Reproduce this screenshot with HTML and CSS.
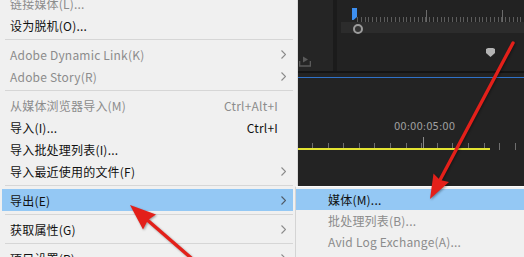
FILE: index.html
```html
<!DOCTYPE html>
<html lang="zh-CN">
<head>
    <meta charset="UTF-8">
    <title>文件菜单 - 导出</title>
    <link rel="stylesheet" href="styles.css">
</head>
<body>
    <div class="screen">
        <div class="menu">
            <div class="item disabled first"><span class="label">链接媒体(L)...</span></div>
            <div class="item"><span class="label">设为脱机(O)...</span></div>
            <div class="sep"></div>
            <div class="item disabled"><span class="label">Adobe Dynamic Link(K)</span><svg class="chev" viewBox="0 0 5 9"><path d="M0.5 0.5 L4.5 4.5 L0.5 8.5"/></svg></div>
            <div class="item disabled"><span class="label">Adobe Story(R)</span><svg class="chev" viewBox="0 0 5 9"><path d="M0.5 0.5 L4.5 4.5 L0.5 8.5"/></svg></div>
            <div class="sep"></div>
            <div class="item disabled"><span class="label">从媒体浏览器导入(M)</span><span class="key">Ctrl+Alt+I</span></div>
            <div class="item"><span class="label">导入(I)...</span><span class="key">Ctrl+I</span></div>
            <div class="item"><span class="label">导入批处理列表(I)...</span></div>
            <div class="item"><span class="label">导入最近使用的文件(F)</span><svg class="chev" viewBox="0 0 5 9"><path d="M0.5 0.5 L4.5 4.5 L0.5 8.5"/></svg></div>
            <div class="sep"></div>
            <div class="item active"><span class="label">导出(E)</span><svg class="chev" viewBox="0 0 5 9"><path d="M0.5 0.5 L4.5 4.5 L0.5 8.5"/></svg></div>
            <div class="sep"></div>
            <div class="item"><span class="label">获取属性(G)</span><svg class="chev" viewBox="0 0 5 9"><path d="M0.5 0.5 L4.5 4.5 L0.5 8.5"/></svg></div>
            <div class="sep"></div>
            <div class="item"><span class="label">项目设置(P)</span><svg class="chev" viewBox="0 0 5 9"><path d="M0.5 0.5 L4.5 4.5 L0.5 8.5"/></svg></div>
        </div>

        <div class="panel">
            <div class="panel-top">
                <div class="strip">
                    <svg class="export-icon" viewBox="0 0 12 11">
                        <path d="M4 0.5 L9 3.5 L4 6.5 Z" fill="#5a5a5a"/>
                        <path d="M0.5 5 V10 H11.5 V5" fill="none" stroke="#5a5a5a" stroke-width="1.6"/>
                    </svg>
                </div>
                <div class="divider"></div>
                <div class="ruler-area">
                    <div class="ruler"></div>
                    <div class="scrollbar"></div>
                    <svg class="playhead" viewBox="0 0 5 12"><path d="M0 0 H5 V9 L1.5 12 H0 Z"/></svg>
                    <span class="knob"></span>
                    <svg class="marker" viewBox="0 0 9 9"><path d="M0 1 L2 0 H7 L9 1 V5 L4.5 9 L0 5 Z"/></svg>
                </div>
            </div>
            <div class="line-dark"></div>
            <div class="line-gap"></div>
            <div class="line-blue"></div>
            <div class="timeline">
                <div class="timecode">00:00:05:00</div>
                <div class="ticks">
                    <span class="work-area"></span>
                </div>
            </div>
        </div>

        <div class="submenu">
            <div class="sub-item active">媒体(M)...</div>
            <div class="sub-item disabled">批处理列表(B)...</div>
            <div class="sub-item disabled">Avid Log Exchange(A)...</div>
        </div>

        <!-- red annotation arrows drawn over the screenshot -->
        <svg class="arrows" viewBox="0 0 524 257">
            <line x1="513" y1="43" x2="440" y2="180" />
            <path d="M430 199 L449 182 L440 180 L433.5 173.5 Z" />
            <line x1="205" y1="270" x2="145" y2="218" />
            <path d="M130 205 L156 214.5 L148 220 L143 229.5 Z" />
        </svg>
    </div>
</body>
</html>
```

FILE: styles.css
```css
html, body {
    margin: 0;
    padding: 0;
}
body {
    font-family: "Noto Sans CJK SC", "Noto Sans", sans-serif;
    font-size: 12px;
    letter-spacing: 0.2px;
    color: #111;
    background-color: #f0f0f0;
}
.screen {
    position: relative;
    width: 524px;
    height: 257px;
    overflow: hidden;
    display: flex;
}
.menu {
    width: 298px;
    flex: none;
    box-sizing: border-box;
    padding: 0 4px 0 2px;
    border-right: 1px solid #dadada;
    background-color: #f0f0f0;
}
.item {
    height: 22px;
    display: flex;
    align-items: center;
    padding: 0 7px 0 8px;
    white-space: nowrap;
}
.item.first {
    margin-top: -8px;
}
.item .label {
    flex: 1;
}
.item .key {
    margin-right: 8px;
}
.item.disabled {
    color: #8c8c8c;
}
.item.active {
    background-color: #94c8f4;
}
.chev {
    width: 5px;
    height: 9px;
    fill: none;
    stroke: #8a8a8a;
    stroke-width: 1.1;
}
.item.active .chev {
    stroke: #4f5a66;
}
.sep {
    height: 1px;
    margin: 3px 0 3px 3px;
    background-color: #d6d6d6;
}
.panel {
    flex: 1;
    height: 186px;
    display: flex;
    flex-direction: column;
    background-color: #232323;
}
.panel-top {
    height: 71px;
    display: flex;
}
.strip {
    width: 35px;
    background-color: #252525;
    display: flex;
    align-items: flex-end;
    padding-bottom: 4px;
    box-sizing: border-box;
}
.export-icon {
    width: 12px;
    height: 11px;
    margin-left: 1px;
}
.divider {
    width: 4px;
    background-color: #1b1b1b;
}
.ruler-area {
    position: relative;
    flex: 1;
    background-color: #222;
}
.ruler {
    height: 22px;
    margin-left: 20px;
    background:
        repeating-linear-gradient(90deg, transparent 0, transparent 69px, #6a6a6a 69px, #6a6a6a 70px, transparent 70px, transparent 76px) 0 10px / 100% 12px no-repeat,
        repeating-linear-gradient(90deg, #5c5c5c 0, #5c5c5c 1px, transparent 1px, transparent 3.8px) 0 17px / 100% 5px no-repeat;
}
.scrollbar {
    height: 11px;
    margin-left: 4px;
    background-color: #2c2c2c;
}
.playhead {
    position: absolute;
    left: 15px;
    top: 8px;
    width: 5px;
    height: 12px;
    fill: #3d8ff0;
}
.knob {
    position: absolute;
    left: 16px;
    top: 24px;
    width: 6px;
    height: 6px;
    border: 2px solid #9c9c9c;
    border-radius: 50%;
    background-color: #333;
}
.marker {
    position: absolute;
    left: 149px;
    top: 48px;
    width: 9px;
    height: 9px;
    fill: #b4b4b4;
}
.line-dark {
    height: 2px;
    background-color: #141414;
}
.line-gap {
    height: 4px;
}
.line-blue {
    height: 1px;
    background-color: #2f72c9;
}
.timeline {
    flex: 1;
}
.timecode {
    margin-top: 42px;
    padding-left: 96px;
    height: 14px;
    line-height: 14px;
    font-family: "DejaVu Sans", sans-serif;
    font-size: 10px;
    letter-spacing: 0;
    color: #a0a0a0;
}
.ticks {
    position: relative;
    height: 13px;
    margin-top: 3px;
    background:
        linear-gradient(#8a8a8a, #8a8a8a) 125px 0 / 1px 13px no-repeat,
        repeating-linear-gradient(90deg, transparent 0, transparent 14px, #6e6e6e 14px, #6e6e6e 15px, transparent 15px, transparent 15.6px) 0 6px / 100% 7px no-repeat;
}
.work-area {
    position: absolute;
    left: 0;
    bottom: 0;
    width: 192px;
    height: 2px;
    background-color: #e3e332;
}
.submenu {
    position: absolute;
    left: 295px;
    top: 186px;
    right: 0;
    bottom: 0;
    padding-top: 2px;
    border-top: 1px solid #fbfbfb;
    border-left: 1px solid #d4d4d4;
    background-color: #f0f0f0;
}
.sub-item {
    height: 21px;
    line-height: 21px;
    padding-left: 32px;
    white-space: nowrap;
}
.sub-item.active {
    background-color: #94c8f4;
}
.sub-item.disabled {
    color: #8c8c8c;
}
.arrows {
    position: absolute;
    left: 0;
    top: 0;
    width: 524px;
    height: 257px;
    pointer-events: none;
    filter: drop-shadow(1px 1px 1px rgba(0, 0, 0, 0.35));
}
.arrows line {
    stroke: #e3201a;
    stroke-width: 3.4;
    stroke-linecap: round;
}
.arrows path {
    fill: #e3201a;
}
```
